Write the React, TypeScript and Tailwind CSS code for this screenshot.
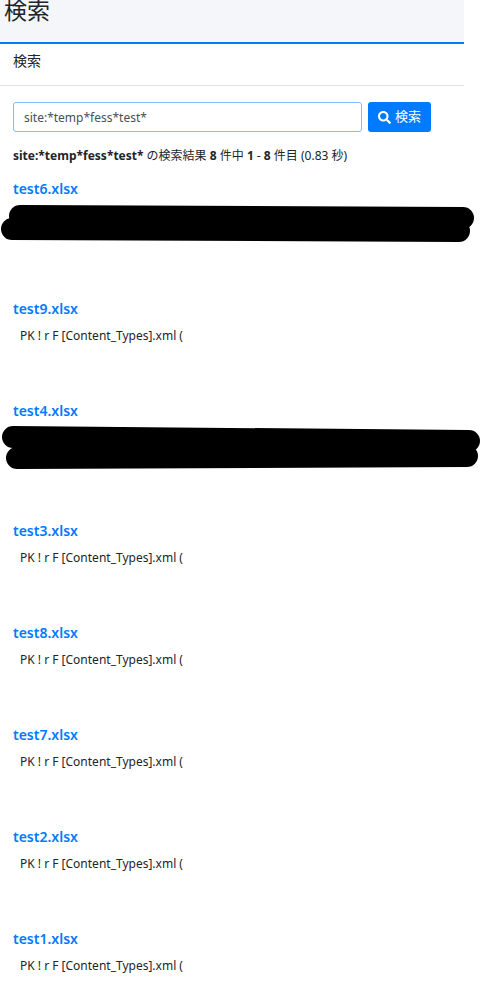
import React, { useState } from "react";
import { FaSearch } from "react-icons/fa";

interface Stroke {
  x1: number;
  y1: number;
  x2: number;
  y2: number;
}

interface Result {
  name: string;
  snippet?: string;
  strokes?: Stroke[];
}

const SNIPPET = "PK ! r F [Content_Types].xml (";

const results: Result[] = [
  {
    name: "test6.xlsx",
    strokes: [
      { x1: 20, y1: 14, x2: 463, y2: 16 },
      { x1: 12, y1: 27, x2: 459, y2: 29 },
    ],
  },
  { name: "test9.xlsx", snippet: SNIPPET },
  {
    name: "test4.xlsx",
    strokes: [
      { x1: 13, y1: 13, x2: 469, y2: 17 },
      { x1: 17, y1: 34, x2: 467, y2: 32 },
    ],
  },
  { name: "test3.xlsx", snippet: SNIPPET },
  { name: "test8.xlsx", snippet: SNIPPET },
  { name: "test7.xlsx", snippet: SNIPPET },
  { name: "test2.xlsx", snippet: SNIPPET },
  { name: "test1.xlsx", snippet: SNIPPET },
];

// Marker strokes that hide a sensitive snippet
function Redaction({ strokes }: { strokes: Stroke[] }) {
  return (
    <svg viewBox="0 0 480 48" className="mt-0.5 block w-full" aria-hidden="true">
      {strokes.map((stroke, i) => (
        <line
          key={i}
          {...stroke}
          stroke="#000"
          strokeWidth={22}
          strokeLinecap="round"
        />
      ))}
    </svg>
  );
}

function ResultItem({ name, snippet, strokes }: Result) {
  return (
    <li className={strokes ? "pb-12" : "pb-[55px]"}>
      <h3 className="px-[13px] text-sm leading-[22px] font-semibold">
        <a href="#" className="text-[#007bff] hover:underline">
          {name}
        </a>
      </h3>
      {strokes ? (
        <Redaction strokes={strokes} />
      ) : (
        <p className="px-5 pt-[7px] text-xs leading-[18px]">{snippet}</p>
      )}
    </li>
  );
}

export default function App() {
  const [query, setQuery] = useState("site:*temp*fess*test*");

  return (
    <div className="bg-white font-['Noto_Sans','Noto_Sans_CJK_JP',sans-serif] text-[#212529]">
      <header className="mr-4 border-b-2 border-[#007bff] bg-[#f4f6f9] pb-[22px] pl-1">
        <h1 className="text-[23px] leading-5">検索</h1>
      </header>
      <nav className="mr-4 border-b border-[#dee2e6] px-[13px] pt-1.5 pb-[13px]">
        <p className="text-sm leading-[22px]">検索</p>
      </nav>

      <main>
        <form
          className="mt-4 mr-[49px] ml-[13px] flex gap-1.5"
          onSubmit={(e) => e.preventDefault()}
        >
          <input
            type="text"
            aria-label="検索"
            value={query}
            onChange={(e) => setQuery(e.target.value)}
            className="h-[30px] min-w-0 flex-1 rounded-[3px] border border-[#80bdff] px-2.5 text-xs text-[#495057] outline-none"
          />
          <button
            type="submit"
            className="flex h-[30px] items-center gap-1 rounded-[3px] bg-[#007bff] px-2.5 text-[13px] text-white"
          >
            <FaSearch className="size-[13px]" />
            検索
          </button>
        </form>

        <p className="mt-[15px] px-[13px] text-xs leading-[18px]">
          <b>site:*temp*fess*test*</b> の検索結果 <b>8</b> 件中 <b>1</b> -{" "}
          <b>8</b> 件目 (0.83 秒)
        </p>

        <ul className="mt-[13px]">
          {results.map((result) => (
            <ResultItem key={result.name} {...result} />
          ))}
        </ul>
      </main>
    </div>
  );
}
